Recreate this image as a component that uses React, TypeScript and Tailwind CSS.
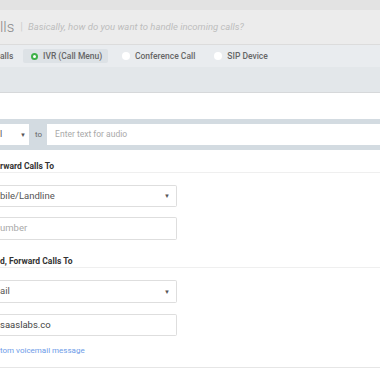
const RADIOS = [
  { id: "conf", label: "Conference Call", gap: "ml-[14px]" },
  { id: "sip", label: "SIP Device", gap: "ml-[19px]" },
];

function Caret() {
  return <span className="text-[6px] leading-none text-[#555]">▼</span>;
}

function SectionLabel({ text }: { text: string }) {
  return (
    <div className="border-b border-[#efefef]">
      <div className="text-[8.5px] font-bold text-[#333] leading-[12px] whitespace-nowrap">{text}</div>
    </div>
  );
}

export default function App() {
  return (
    <div
      className="w-[380px] h-[380px] overflow-hidden bg-white text-[#555]"
      style={{ fontFamily: "Roboto, 'Liberation Sans', sans-serif" }}
    >
      {/* top strip */}
      <div className="h-[10px] bg-[#e3e3e3]" />

      {/* heading */}
      <div className="h-[34px] bg-[#ececec] flex items-center whitespace-nowrap">
        <span className="text-[15px] font-light text-[#8a8a8a] leading-none">lls</span>
        <span className="ml-[6px] text-[11px] text-[#cfcfcf]">|</span>
        <span className="ml-[5px] text-[9.5px] italic text-[#bdbdbd]">
          Basically, how do you want to handle incoming calls?
        </span>
      </div>

      {/* radio bar */}
      <div className="h-[23px] bg-[#e9ecef] border-t border-[#dcdcdc] flex items-center whitespace-nowrap text-[8.5px] font-medium text-[#666]">
        <span className="w-[23px]">alls</span>
        <div className="h-[14px] w-[85px] rounded-[2px] bg-[#dde2e6] flex items-center pl-[8px] gap-[5px]">
          <span className="w-[7px] h-[7px] rounded-full border-[2px] border-[#3fb14a] bg-white" />
          <span>IVR (Call Menu)</span>
        </div>
        {RADIOS.map((r) => (
          <div key={r.id} className={`flex items-center gap-[5px] ${r.gap}`}>
            <span className="w-[8px] h-[8px] rounded-full bg-white" />
            <span>{r.label}</span>
          </div>
        ))}
      </div>

      {/* grey band */}
      <div className="h-[26px] bg-[#e3e7ea] border-b border-[#d6d8da]" />

      {/* audio row */}
      <div className="mt-[26px] h-[31px] bg-[#d3dbe1] flex items-center">
        <div className="w-[29px] h-[21px] bg-white flex items-center justify-between pr-[3px] text-[9px]">
          <span>l</span>
          <Caret />
        </div>
        <span className="ml-[6px] text-[8px] text-[#666]">to</span>
        <div className="ml-[5px] flex-1 h-[21px] bg-white flex items-center pl-[8px] text-[8.5px] text-[#a9a9a9]">
          Enter text for audio
        </div>
      </div>

      {/* forward section */}
      <div className="pt-[10px]">
        <SectionLabel text="rward Calls To" />
        <div className="mt-[12px] flex flex-col gap-[10px] w-[177px]">
          <div className="h-[22px] border border-l-0 border-[#dedede] rounded-r-[2px] flex items-center justify-between pr-[6px] text-[9.5px] text-[#555]">
            <span>bile/Landline</span>
            <Caret />
          </div>
          <div className="h-[23px] border border-l-0 border-[#dedede] rounded-r-[2px] flex items-center text-[9.5px] text-[#a9a9a9]">
            umber
          </div>
        </div>
      </div>

      {/* unanswered section */}
      <div className="pt-[15px]">
        <SectionLabel text="d, Forward Calls To" />
        <div className="mt-[12px] flex flex-col gap-[11px] w-[177px]">
          <div className="h-[23px] border border-l-0 border-[#dedede] rounded-r-[2px] flex items-center justify-between pr-[6px] text-[9.5px] text-[#555]">
            <span>ail</span>
            <Caret />
          </div>
          <div className="h-[22px] border border-l-0 border-[#dedede] rounded-r-[2px] flex items-center text-[9.5px] text-[#444]">
            saaslabs.co
          </div>
        </div>
        <div className="mt-[9px] h-[12px] text-[8px] leading-[12px] text-[#6c9be8] whitespace-nowrap">
          tom voicemail message
        </div>
        <div className="mt-[10px] border-b border-[#e6e6e6]" />
      </div>
    </div>
  );
}
